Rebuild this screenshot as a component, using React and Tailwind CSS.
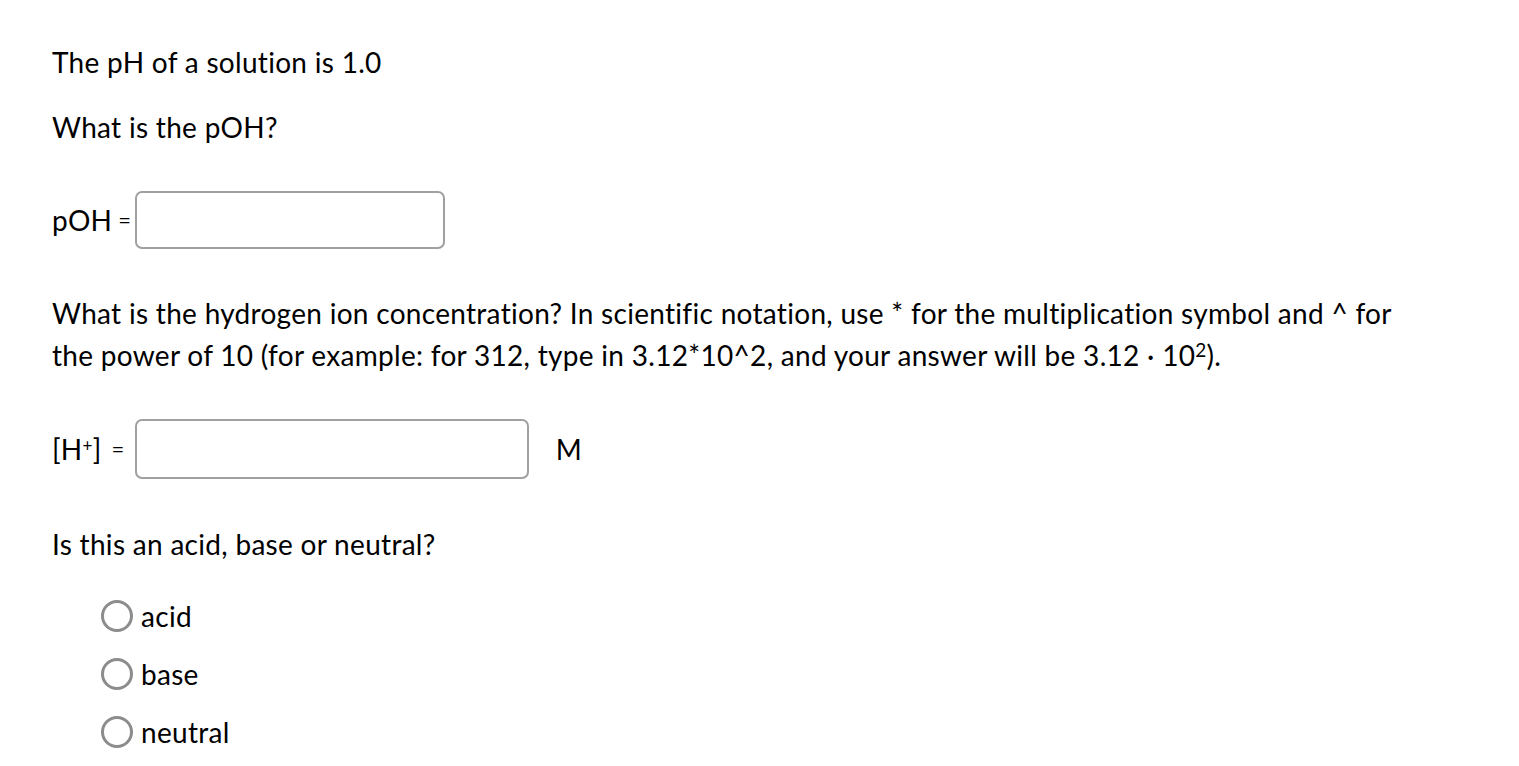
import React from 'react';

const Radio = ({ label }) => (
  <label className="flex items-center h-[58px]">
    <span className="w-[32px] h-[32px] rounded-full border-[3px] border-[#8c8c8c] bg-white"></span>
    <span className="ml-[8px]">{label}</span>
  </label>
);

const App = () => {
  return (
    <div className="min-h-screen bg-white text-black px-[52px] pt-[41px] text-[28px] leading-[42px] tracking-[0.3px]" style={{ fontFamily: 'Lato, "Open Sans", sans-serif' }}>
      <p>The pH of a solution is 1.0</p>
      <p className="mt-[23px]">What is the pOH?</p>

      <div className="flex items-center mt-[43px]">
        <span>pOH</span>
        <span className="ml-[6px] text-[22px]">=</span>
        <div className="ml-[4px] w-[310px] h-[58px] border-2 border-[#a0a0a0] rounded-[7px]"></div>
      </div>

      <p className="mt-[43px] max-w-[1362px]">
        What is the hydrogen ion concentration? In scientific notation, use * for the multiplication symbol and ^ for the power of 10 (for example: for 312, type in 3.12*10^2, and your answer will be 3.12 · 10<sup className="text-[19px] leading-none">2</sup>).
      </p>

      <div className="flex items-center mt-[43px]">
        <span>[H<sup className="text-[17px] leading-none">+</sup>]</span>
        <span className="ml-[10px] text-[22px]">=</span>
        <div className="ml-[10px] w-[394px] h-[60px] border-2 border-[#a0a0a0] rounded-[7px]"></div>
        <span className="ml-[27px]">M</span>
      </div>

      <p className="mt-[44px]">Is this an acid, base or neutral?</p>

      <div className="mt-[22px] pl-[49px] flex flex-col">
        <Radio label="acid" />
        <Radio label="base" />
        <Radio label="neutral" />
      </div>
    </div>
  );
};

export default App;
